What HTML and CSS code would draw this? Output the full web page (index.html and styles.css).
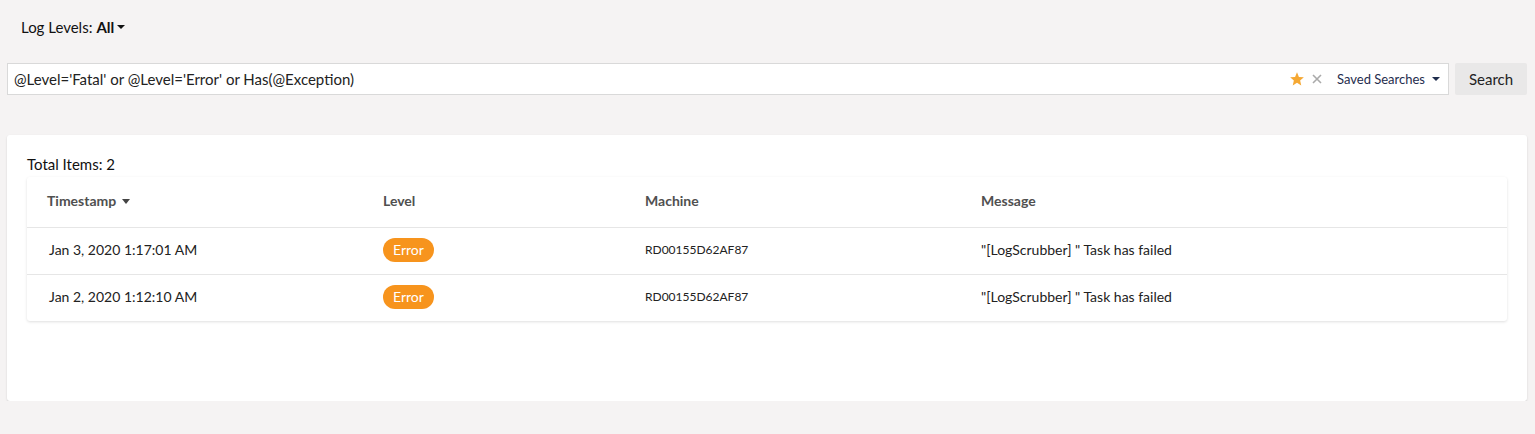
FILE: index.html
```html
<!DOCTYPE html>
<html>
<head>
<meta charset="utf-8">
<link rel="stylesheet" href="styles.css">
</head>
<body>
<div class="levels">Log Levels: <b>All</b><span class="caret"></span></div>
<div class="search-row">
  <div class="search-box">
    <span class="query">@Level='Fatal' or @Level='Error' or Has(@Exception)</span>
    <svg class="star" width="16" height="16" viewBox="0 0 24 24"><path fill="#f5a833" d="M12 2l2.9 6.9 7.4.6-5.6 4.9 1.7 7.3L12 17.8l-6.4 3.9 1.7-7.3L1.7 9.5l7.4-.6z"/></svg>
    <svg class="clear" width="12" height="12" viewBox="0 0 12 12"><path d="M2 2l8 8M10 2l-8 8" stroke="#aaa" stroke-width="1.6" fill="none"/></svg>
    <span class="saved">Saved Searches</span><span class="caret navy"></span>
  </div>
  <button class="search-btn">Search</button>
</div>
<div class="card">
  <div class="total">Total Items: 2</div>
  <div class="table">
    <div class="row head">
      <div>Timestamp<span class="caret gray"></span></div>
      <div>Level</div>
      <div>Machine</div>
      <div>Message</div>
    </div>
    <div class="row">
      <div class="ts">Jan 3, 2020 1:17:01 AM</div>
      <div><span class="badge">Error</span></div>
      <div class="machine">RD00155D62AF87</div>
      <div>"[LogScrubber] " Task has failed</div>
    </div>
    <div class="row">
      <div class="ts">Jan 2, 2020 1:12:10 AM</div>
      <div><span class="badge">Error</span></div>
      <div class="machine">RD00155D62AF87</div>
      <div>"[LogScrubber] " Task has failed</div>
    </div>
  </div>
</div>
</body>
</html>
```

FILE: styles.css
```css
html, body {
  margin: 0;
  padding: 0;
  background: #f5f3f3;
  font-family: Lato, "Liberation Sans", sans-serif;
  color: #222;
}
.levels {
  font-size: 15px;
  padding: 8px 21px 0;
  height: 45px;
  box-sizing: border-box;
  display: flex;
  align-items: center;
  color: #111;
}
.levels b { margin-left: 4px; font-weight: 700; }
.caret {
  display: inline-block;
  width: 0; height: 0;
  border-left: 4px solid transparent;
  border-right: 4px solid transparent;
  border-top: 4px solid #111;
  margin-left: 3px;
}
.caret.navy { border-top-color: #1f2d4d; margin-left: 7px; }
.caret.gray {
  border-left-width: 4.5px;
  border-right-width: 4.5px;
  border-top: 5px solid #444;
  margin-left: 6px;
  position: relative;
  top: -2px;
}
.search-row {
  display: flex;
  gap: 6px;
  margin: 18px 8px 0 7px;
  height: 32px;
}
.search-box {
  flex: 1;
  display: flex;
  align-items: center;
  background: #fff;
  border: 1px solid #d9d9d9;
  padding: 0 8px 0 6px;
  font-size: 15px;
}
.query { flex: 1; color: #222; }
.star { margin-right: 6px; }
.clear { margin-right: 14px; }
.saved { font-size: 13px; color: #1f2d4d; }
.search-btn {
  width: 72px;
  border: none;
  background: #e9e8e8;
  border-radius: 2px;
  font-family: Lato, "Liberation Sans", sans-serif;
  font-size: 15px;
  color: #222;
  padding: 0;
}
.card {
  margin: 40px 8px 0 7px;
  background: #fff;
  height: 266px;
  box-sizing: border-box;
  padding: 20px 20px 0;
  border-radius: 3px;
  box-shadow: 0 1px 2px rgba(0,0,0,0.15);
}
.total { font-size: 15px; line-height: 19px; color: #111; }
.table {
  margin-top: 3px;
  background: #fff;
  border-radius: 3px;
  box-shadow: 0 1px 3px rgba(0,0,0,0.13);
}
.row {
  display: grid;
  grid-template-columns: 336px 262px 336px 1fr;
  align-items: center;
  height: 46px;
  box-sizing: content-box;
  border-top: 1px solid #e6e6e6;
  padding-left: 20px;
  font-size: 14px;
  color: #222;
}
.row > div { margin-top: -3px; }
.row.head {
  height: 50px;
  border-top: none;
  font-weight: 700;
  color: #505050;
}
.ts { padding-left: 2px; }
.machine { font-size: 12px; }
.badge {
  display: inline-flex;
  align-items: center;
  justify-content: center;
  width: 51px;
  height: 24px;
  border-radius: 12px;
  background: #f7941d;
  color: #fff;
  font-size: 14px;
}
```
